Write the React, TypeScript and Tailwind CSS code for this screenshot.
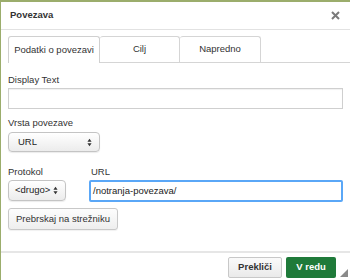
import React from "react";

// Select with mac-style up/down arrows
function FakeSelect({ value, className }: { value: string; className: string }) {
  return (
    <div
      className={
        "flex items-center justify-between rounded-[4px] border border-[#c4c4c4] bg-gradient-to-b from-[#ffffff] to-[#ececec] pr-[7px] shadow-[0_1px_1px_rgba(0,0,0,0.08)] " +
        className
      }
    >
      <span className="whitespace-nowrap text-[9.5px] text-[#222]">{value}</span>
      <svg width="5" height="9" viewBox="0 0 6 10">
        <path d="M3 0.5 L5.5 4 L0.5 4 Z" fill="#333" />
        <path d="M3 9.5 L5.5 6 L0.5 6 Z" fill="#333" />
      </svg>
    </div>
  );
}

export default function App() {
  return (
    <div
      className="w-[350px] h-[280px] bg-[#9bad6c] pl-px pt-[2px]"
      style={{ fontFamily: "'Liberation Sans', Arial, sans-serif" }}
    >
      <div className="h-full bg-white flex flex-col">
        {/* Header */}
        <div className="h-[28px] flex items-center justify-between border-b border-[#e2e2e2] pl-[9px] pr-[10px]">
          <span className="text-[9.5px] font-bold text-[#333]">Povezava</span>
          <svg width="9" height="9" viewBox="0 0 9 9">
            <path d="M1 1 L8 8 M8 1 L1 8" stroke="#7a7a7a" strokeWidth="2" />
          </svg>
        </div>

        {/* Tabs */}
        <div className="mt-[6px] ml-[7px] flex h-[27px] border-b border-[#d5d5d5]">
          <div className="-mb-px flex w-[92px] items-center justify-center rounded-t-[3px] border border-b-0 border-[#d0d0d0] bg-white text-[9.5px] text-[#333]">
            Podatki o povezavi
          </div>
          <div className="flex w-[80px] items-center justify-center rounded-t-[3px] border border-l-0 border-b-0 border-[#d5d5d5] bg-white text-[9.5px] text-[#333]">
            Cilj
          </div>
          <div className="flex w-[81px] items-center justify-center rounded-t-[3px] border border-l-0 border-b-0 border-[#d5d5d5] bg-white text-[9.5px] text-[#333]">
            Napredno
          </div>
        </div>

        {/* Body */}
        <div className="flex-1 px-[7px]">
          <div className="mt-[10px] leading-[14px] text-[9.5px] text-[#333]">Display Text</div>
          <div className="mt-px h-[21px] border border-[#cfcfcf] shadow-[inset_0_1px_1px_rgba(0,0,0,0.06)]" />

          <div className="mt-[7px] leading-[14px] text-[9.5px] text-[#333]">Vrsta povezave</div>
          <FakeSelect value="URL" className="mt-[2px] h-[20px] w-[92px] pl-[9px]" />

          <div className="mt-[13px] flex gap-[23px]">
            <div className="flex flex-col">
              <div className="leading-[14px] text-[9.5px] text-[#333]">Protokol</div>
              <FakeSelect value="<drugo>" className="mt-px h-[21px] w-[58px] pl-[6px]" />
            </div>
            <div className="flex flex-1 flex-col">
              <div className="pl-[2px] leading-[14px] text-[9.5px] text-[#333]">URL</div>
              <div className="mt-px flex h-[22px] items-center rounded-[2px] border-2 border-[#5aa7f7] pl-[2px] text-[9.5px] text-[#222]">
                /notranja-povezava/
              </div>
            </div>
          </div>

          <div className="mt-[6px] flex h-[22px] w-[110px] items-center justify-center rounded-[3px] border border-[#c8c8c8] bg-gradient-to-b from-[#fdfdfd] to-[#eeeeee] text-[9.5px] text-[#333] shadow-[0_1px_1px_rgba(0,0,0,0.06)]">
            Prebrskaj na strežniku
          </div>
        </div>

        {/* Footer */}
        <div className="flex h-[29px] items-start border-t-2 border-[#e6e6e6] pt-[4px]">
          <div className="flex-1" />
          <div className="flex h-[21px] w-[54px] items-center justify-center rounded-[2px] border border-[#c8c8c8] bg-gradient-to-b from-[#fafafa] to-[#eaeaea] text-[9.5px] font-bold text-[#333]">
            Prekliči
          </div>
          <div className="ml-[4px] flex h-[21px] w-[50px] items-center justify-center rounded-[2px] bg-[#1f7a3a] text-[9.5px] font-bold text-white">
            V redu
          </div>
          <svg className="ml-[4px] mt-[12px]" width="8" height="8" viewBox="0 0 8 8">
            <path d="M8 0 L8 8 L0 8 Z" fill="#8a8a8a" />
          </svg>
          <div className="w-[2px]" />
        </div>
      </div>
    </div>
  );
}
